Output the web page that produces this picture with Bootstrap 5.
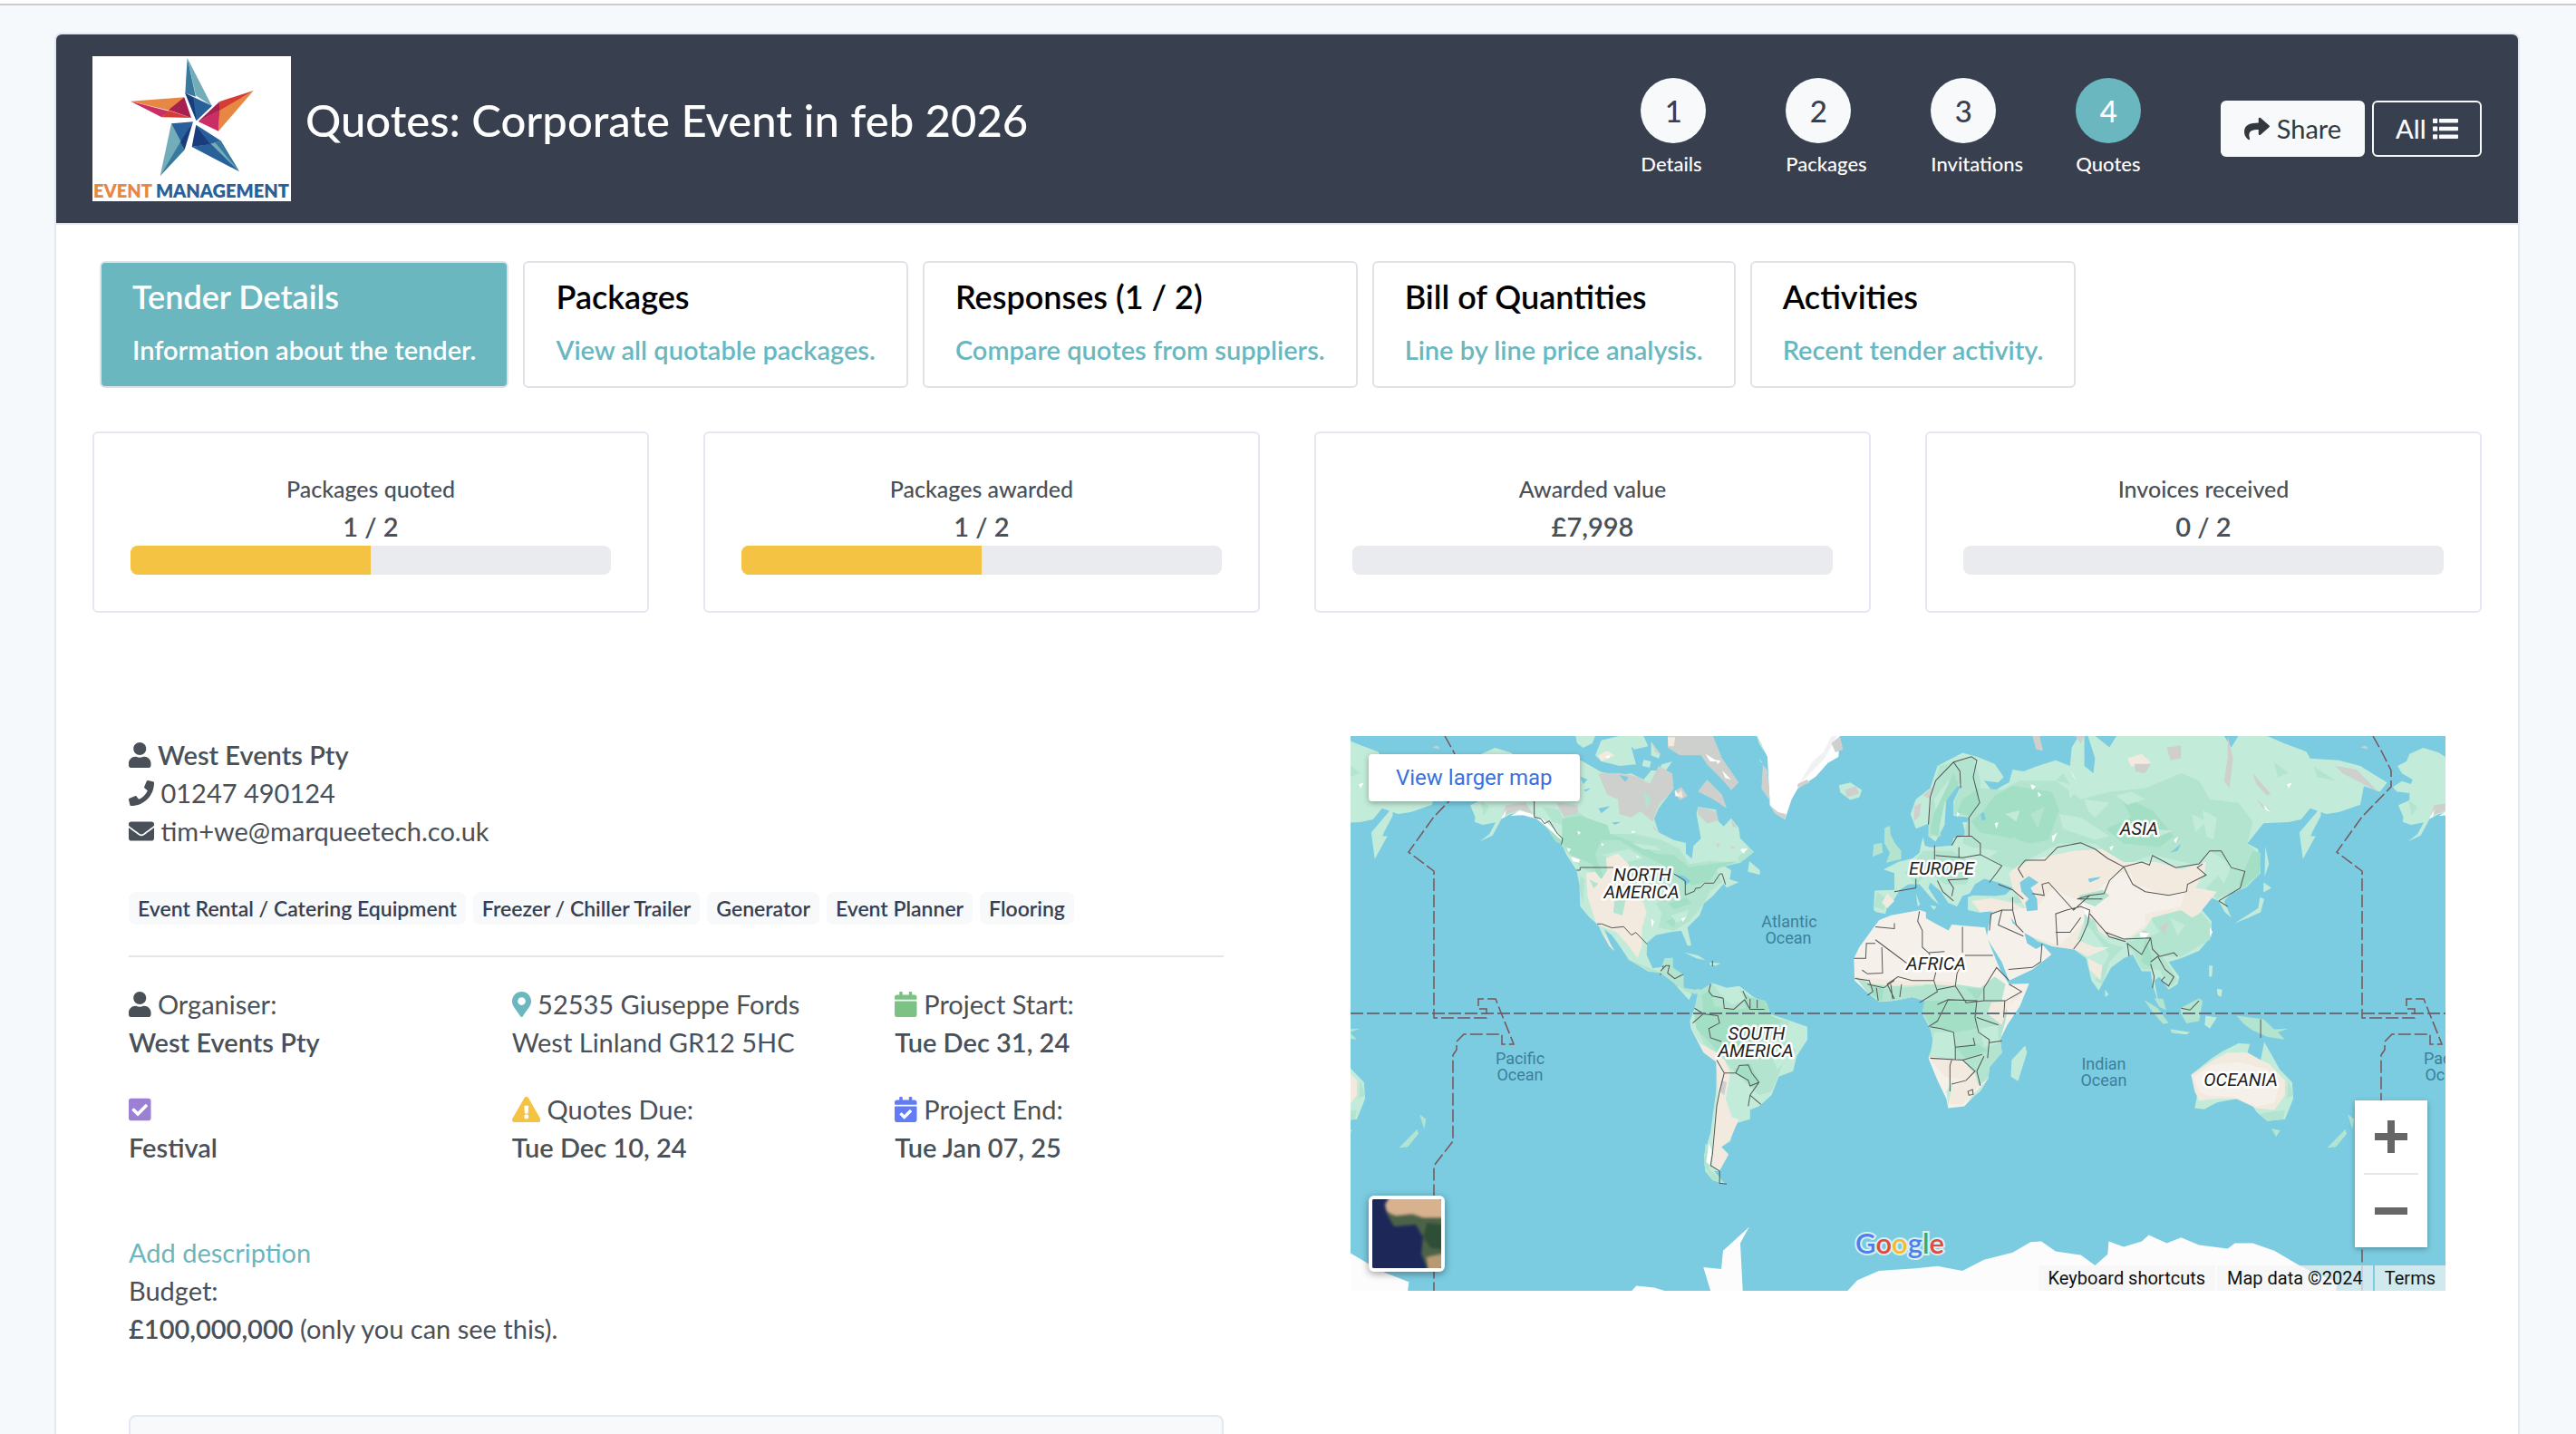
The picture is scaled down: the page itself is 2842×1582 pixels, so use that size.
<!DOCTYPE html>
<html lang="en">
<head>
<meta charset="utf-8">
<meta name="viewport" content="width=device-width, initial-scale=1">
<title>Quotes: Corporate Event in feb 2026</title>
<link href="https://cdn.jsdelivr.net/npm/bootstrap@5.3.0/dist/css/bootstrap.min.css" rel="stylesheet">
<style>
  :root { --teal: #6ab7bf; --navy: #384050; --line: #e4e8f1; --ink: #495057; }
  body { font-family: Lato, "Open Sans", sans-serif; font-size: 29px; line-height: 42px; color: var(--ink); background: #f5f9fc; border-top: 4px solid #fff; }
  .page-wrap { border-top: 2px solid #c9cbcf; padding: 30px 62px 0 60px; }
  .tender-card { border: 2px solid var(--line); border-radius: 8px 8px 0 0; background: #fff; min-height: 100vh; }
  .tender-head { background: var(--navy); border-bottom: 2px solid var(--line); border-radius: 6px 6px 0 0; padding: 24px 40px; }
  .tender-title { font-size: 49px; line-height: 60px; font-weight: 500; margin: 0 0 20px 16px; color: #fff; }
  .brand-logo { width: 219px; height: 160px; background: #fff; flex: none; }
  .step-link { width: 160px; color: #fff; font-size: 22px; line-height: 34px; font-weight: 500; text-decoration: none; }
  .step-num { width: 72px; height: 72px; border-radius: 50%; background: #f8f9fb; color: var(--navy); font-size: 33px; font-weight: 500; margin-bottom: 6px; }
  .step-link.current .step-num { background: var(--teal); color: #fff; }
  .head-btn { font-size: 29px; line-height: 42px; padding: 8px 24px; border: 2px solid #f8f9fb; border-radius: 6px; --bs-btn-color: #33383e; --bs-btn-bg: #f8f9fb; }
  .head-btn.btn-outline-light { --bs-btn-color: #f8f9fb; --bs-btn-bg: transparent; font-weight: 500; }
  .ico { height: 28px; width: auto; fill: currentColor; vertical-align: -3px; }
  .ico-teal { fill: var(--teal); }
  .ico-green { fill: #7cc285; }
  .ico-violet { fill: #9c80d4; }
  .ico-amber { fill: #f4c343; }
  .ico-blue { fill: #627cf4; }
  .tab-strip { padding: 40px 48px 0; gap: 16px; }
  .tab-box { border: 2px solid #dfe3e8; border-radius: 6px; padding: 16px 34px; height: 140px; text-decoration: none; color: var(--teal); font-weight: 600; white-space: nowrap; }
  .tab-box strong { display: block; font-size: 36px; line-height: 42px; font-weight: 600; color: #000; margin-bottom: 17px; }
  .tab-box.active { background: var(--teal); color: #fff; }
  .tab-box.active strong { color: #fff; }
  .stat-row { padding: 48px 40px 0; gap: 60px; }
  .stat-box { border: 2px solid var(--line); border-radius: 6px; padding: 40px; flex: 1 1 0; text-align: center; font-weight: 600; }
  .stat-label { font-size: 25px; font-weight: 500; }
  .stat-box .progress { height: 32px; border-radius: 8px; background: #e9ebef; }
  .stat-box .progress-bar { background: #f4c343; }
  .detail-row { padding: 136px 80px 0; gap: 140px; }
  .detail-col { flex: 1 1 0; min-width: 0; }
  .detail-col a { color: inherit; text-decoration: none; }
  .detail-col a.add-link { color: var(--teal); }
  .tag-list { gap: 8px; margin: 46px 0 34px; }
  .tag-pill { background: #f8f9fb; color: var(--navy); border-radius: 8px; padding: 0 10px; font-size: 23px; line-height: 36px; font-weight: 600; }
  .rule { height: 2px; background: #e3e5e8; margin-bottom: 31px; }
  .fact-row { --bs-gutter-x: 60px; --bs-gutter-y: 32px; margin-bottom: 74px; }
  .detail-col b { font-weight: 600; }
  .sub-card { border: 2px solid var(--line); border-radius: 8px; background: #f8f9fb; margin-top: 74px; height: 120px; }
  .map-box { position: relative; height: 612px; overflow: hidden; background: #7bcce1; font-family: Roboto, Arial, sans-serif; }
  .map-box > svg { display: block; width: 100%; height: 100%; }
  .map-larger { position: absolute; left: 20px; top: 20px; background: #fff; border-radius: 4px; padding: 5px 30px; font-size: 24px; box-shadow: 0 2px 6px rgba(0,0,0,.3); }
  .detail-col a.map-larger { color: #3871e0; }
  .map-sat { position: absolute; left: 20px; bottom: 21px; width: 84px; height: 84px; padding: 0; border: 4px solid #fff; border-radius: 6px; overflow: hidden; box-shadow: 0 2px 8px rgba(0,0,0,.4); background: #1e2a5c; }
  .map-sat svg { display: block; width: 100%; height: 100%; }
  .map-zoom { position: absolute; right: 20px; bottom: 48px; width: 80px; background: #fff; box-shadow: 0 2px 6px rgba(0,0,0,.3); padding: 0 10px; }
  .map-zoom button { display: flex; width: 60px; height: 80px; border: 0; background: none; align-items: center; justify-content: center; padding: 0; }
  .map-zoom button + button { border-top: 2px solid #e6e6e6; height: 82px; }
  .map-foot { position: absolute; right: 0; bottom: 0; gap: 2px; font-size: 20px; line-height: 28px; color: #111; white-space: nowrap; }
  .map-foot > * { background: rgba(245,245,245,.7); padding: 0 11px; }
  .map-foot button { border: 0; color: inherit; }
</style>
<script src="https://cdn.jsdelivr.net/npm/bootstrap@5.3.0/dist/js/bootstrap.bundle.min.js"></script>
</head>
<body class="vh-100 overflow-hidden">
<div class="page-wrap">
<main class="tender-card">
  <header class="tender-head d-flex align-items-center">
    <svg class="brand-logo" viewBox="36 36 657 480" role="img" aria-label="Event Management">
      <path fill="#74adba" d="M350 42L432 202 378 166z"/><path fill="#387a9d" d="M350 42L378 170 343 158z"/>
      <path fill="#28609a" d="M343 158L432 200 380 250z"/><path fill="#193c7c" d="M343 158L370 174 380 250z"/>
      <path fill="#e78743" d="M162 185L340 172 302 218z"/><path fill="#cb2d65" d="M162 185L290 218 265 238z"/>
      <path fill="#d43c34" d="M290 216L363 240 265 238z"/><path fill="#a82050" d="M340 172L363 240 288 214z"/>
      <path fill="#d43c34" d="M569 150L456 220 457 186z"/><path fill="#e78743" d="M569 150L453 284 456 216z"/>
      <path fill="#cb2d65" d="M386 252L457 212 453 284z"/><path fill="#a82050" d="M457 186L457 214 386 252z"/>
      <path fill="#74adba" d="M297 259L330 320 260 433z"/><path fill="#387a9d" d="M328 318L341 346 260 433z"/>
      <path fill="#28609a" d="M297 259L369 253 330 322z"/><path fill="#193c7c" d="M369 253L341 346 327 320z"/>
      <path fill="#74adba" d="M461 316L522 418 424 328z"/><path fill="#28609a" d="M365 336L428 326 522 418z"/>
      <path fill="#28609a" d="M379 263L461 316 424 328z"/><path fill="#193c7c" d="M379 263L426 328 365 336z"/>
      <path fill="#387a9d" d="M461 316L522 418 442 322z"/>
      <text x="39" y="504" font-family="Lato, sans-serif" font-weight="800" font-size="60" fill="#e78743">EVENT <tspan fill="#28609a">MANAGEMENT</tspan></text>
    </svg>
    <h1 class="tender-title me-auto">Quotes: Corporate Event in feb 2026</h1>
    <nav class="d-flex" aria-label="Steps">
      <a href="#" class="step-link"><span class="step-num d-flex align-items-center justify-content-center">1</span>Details</a>
      <a href="#" class="step-link"><span class="step-num d-flex align-items-center justify-content-center">2</span>Packages</a>
      <a href="#" class="step-link"><span class="step-num d-flex align-items-center justify-content-center">3</span>Invitations</a>
      <a href="#" class="step-link current" aria-current="step"><span class="step-num d-flex align-items-center justify-content-center">4</span>Quotes</a>
    </nav>
    <div class="d-flex gap-2">
      <button type="button" class="btn btn-light head-btn"><svg class="ico" viewBox="0 0 512 512"><path d="M503.691 189.836L327.687 37.851C312.281 24.546 288 35.347 288 56.015v80.053C127.371 137.907 0 170.1 0 322.326c0 61.441 39.581 122.309 83.333 154.132 13.653 9.931 33.111-2.533 28.077-18.631C66.066 312.814 132.917 274.316 288 272.085V360c0 20.7 24.3 31.453 39.687 18.164l176.004-152c11.071-9.562 11.086-26.753 0-36.328z"/></svg> Share</button>
      <button type="button" class="btn btn-outline-light head-btn">All <svg class="ico" viewBox="0 0 512 512"><path d="M80 368H16a16 16 0 0 0-16 16v64a16 16 0 0 0 16 16h64a16 16 0 0 0 16-16v-64a16 16 0 0 0-16-16zm0-320H16A16 16 0 0 0 0 64v64a16 16 0 0 0 16 16h64a16 16 0 0 0 16-16V64a16 16 0 0 0-16-16zm0 160H16a16 16 0 0 0-16 16v64a16 16 0 0 0 16 16h64a16 16 0 0 0 16-16v-64a16 16 0 0 0-16-16zm64-152h352a16 16 0 0 1 16 16v48a16 16 0 0 1-16 16H144a16 16 0 0 1-16-16V72a16 16 0 0 1 16-16zm0 160h352a16 16 0 0 1 16 16v48a16 16 0 0 1-16 16H144a16 16 0 0 1-16-16v-48a16 16 0 0 1 16-16zm0 160h352a16 16 0 0 1 16 16v48a16 16 0 0 1-16 16H144a16 16 0 0 1-16-16v-48a16 16 0 0 1 16-16z"/></svg></button>
    </div>
  </header>

  <nav class="tab-strip d-flex" aria-label="Tender sections">
    <a href="#" class="tab-box active"><strong>Tender Details</strong>Information about the tender.</a>
    <a href="#" class="tab-box"><strong>Packages</strong>View all quotable packages.</a>
    <a href="#" class="tab-box"><strong>Responses (1 / 2)</strong>Compare quotes from suppliers.</a>
    <a href="#" class="tab-box"><strong>Bill of Quantities</strong>Line by line price analysis.</a>
    <a href="#" class="tab-box"><strong>Activities</strong>Recent tender activity.</a>
  </nav>

  <section class="stat-row d-flex">
    <div class="stat-box"><div class="stat-label">Packages quoted</div><div>1 / 2</div><div class="progress"><div class="progress-bar" style="width:50%"></div></div></div>
    <div class="stat-box"><div class="stat-label">Packages awarded</div><div>1 / 2</div><div class="progress"><div class="progress-bar" style="width:50%"></div></div></div>
    <div class="stat-box"><div class="stat-label">Awarded value</div><div>£7,998</div><div class="progress"><div class="progress-bar" style="width:0%"></div></div></div>
    <div class="stat-box"><div class="stat-label">Invoices received</div><div>0 / 2</div><div class="progress"><div class="progress-bar" style="width:0%"></div></div></div>
  </section>

  <section class="detail-row d-flex align-items-start">
    <div class="detail-col">
      <div><svg class="ico" viewBox="0 0 448 512"><path id="user" d="M224 256c70.700 0 128-57.300 128-128S294.700 0 224 0 96 57.300 96 128s57.300 128 128 128zm89.600 32h-16.700c-22.200 10.200-46.900 16-72.900 16s-50.600-5.800-72.900-16h-16.700C60.200 288 0 348.200 0 422.400V464c0 26.500 21.500 48 48 48h352c26.500 0 48-21.500 48-48v-41.600c0-74.200-60.200-134.400-134.400-134.400z"/></svg> <b>West Events Pty</b></div>
      <div><svg class="ico" viewBox="0 0 512 512"><path d="M493.400 24.600l-104-24c-11.300-2.600-22.900 3.300-27.500 13.900l-48 112c-4.200 9.800-1.400 21.300 6.900 28l60.600 49.600c-36 76.700-98.900 140.500-177.200 177.200l-49.600-60.600c-6.800-8.300-18.200-11.100-28-6.900l-112 48C3.900 366.500-2 378.100.6 389.400l24 104C27.100 504.200 36.700 512 48 512c256.100 0 464-207.500 464-464 0-11.200-7.700-20.900-18.600-23.400z"/></svg> <a href="tel:01247490124">01247 490124</a></div>
      <div><svg class="ico" viewBox="0 0 512 512"><path d="M502.300 190.800c3.900-3.100 9.700-.2 9.700 4.700V400c0 26.500-21.500 48-48 48H48c-26.500 0-48-21.500-48-48V195.600c0-5 5.700-7.800 9.700-4.700 22.400 17.400 52.100 39.500 154.100 113.600 21.100 15.400 56.700 47.800 92.200 47.600 35.700.3 72-32.800 92.300-47.600 102-74.100 131.600-96.300 154-113.700zM256 320c23.200.4 56.600-29.200 73.400-41.400 132.700-96.300 142.800-104.700 173.400-128.700 5.800-4.500 9.200-11.500 9.200-18.900v-19c0-26.500-21.500-48-48-48H48c-26.500 0-48 21.500-48 48v19c0 7.400 3.400 14.300 9.200 18.900 30.600 23.900 40.700 32.400 173.400 128.700 16.800 12.200 50.200 41.800 73.400 41.400z"/></svg> <a href="mailto:tim+we@marqueetech.co.uk">tim+we@marqueetech.co.uk</a></div>
      <div class="tag-list d-flex flex-wrap">
        <span class="tag-pill">Event Rental / Catering Equipment</span><span class="tag-pill">Freezer / Chiller Trailer</span><span class="tag-pill">Generator</span><span class="tag-pill">Event Planner</span><span class="tag-pill">Flooring</span>
      </div>
      <div class="rule"></div>
      <div class="row fact-row mt-0">
        <div class="col-4 mt-0"><svg class="ico" viewBox="0 0 448 512"><use href="#user"/></svg> Organiser:<br><b>West Events Pty</b></div>
        <div class="col-4 mt-0"><svg class="ico ico-teal" viewBox="0 0 384 512"><path d="M172.268 501.670C26.970 291.031 0 269.413 0 192 0 85.961 85.961 0 192 0s192 85.961 192 192c0 77.413-26.970 99.031-172.268 309.670-9.535 13.774-29.930 13.773-39.464 0zM192 272c44.183 0 80-35.817 80-80s-35.817-80-80-80-80 35.817-80 80 35.817 80 80 80z"/></svg> 52535 Giuseppe Fords<br>West Linland GR12 5HC</div>
        <div class="col-4 mt-0"><svg class="ico ico-green" viewBox="0 0 448 512"><path d="M12 192h424c6.600 0 12 5.400 12 12v260c0 26.500-21.500 48-48 48H48c-26.500 0-48-21.500-48-48V204c0-6.600 5.400-12 12-12zm436-44v-36c0-26.500-21.500-48-48-48h-48V12c0-6.600-5.400-12-12-12h-40c-6.600 0-12 5.400-12 12v52H160V12c0-6.600-5.400-12-12-12h-40c-6.600 0-12 5.400-12 12v52H48C21.500 64 0 85.500 0 112v36c0 6.600 5.400 12 12 12h424c6.600 0 12-5.400 12-12z"/></svg> Project Start:<br><b>Tue Dec 31, 24</b></div>
        <div class="col-4"><svg class="ico ico-violet" viewBox="0 0 448 512"><path d="M400 480H48c-26.510 0-48-21.490-48-48V80c0-26.510 21.490-48 48-48h352c26.510 0 48 21.490 48 48v352c0 26.510-21.490 48-48 48zm-204.686-98.059l184-184c6.248-6.248 6.248-16.379 0-22.627l-22.627-22.627c-6.248-6.248-16.379-6.249-22.628 0L184 302.745l-70.059-70.059c-6.248-6.248-16.379-6.248-22.628 0l-22.627 22.627c-6.248 6.248-6.248 16.379 0 22.627l104 104c6.249 6.250 16.379 6.250 22.628.001z"/></svg><br><b>Festival</b></div>
        <div class="col-4"><svg class="ico ico-amber" viewBox="0 0 576 512"><path d="M569.517 440.013C587.975 472.007 564.806 512 527.940 512H48.054c-36.937 0-59.999-40.055-41.577-71.987L246.423 23.985c18.467-32.009 64.720-31.951 83.154 0l239.940 416.028zM288 354c-25.405 0-46 20.595-46 46s20.595 46 46 46 46-20.595 46-46-20.595-46-46-46zm-43.673-165.346l7.418 136c.347 6.364 5.609 11.346 11.982 11.346h48.546c6.373 0 11.635-4.982 11.982-11.346l7.418-136c.375-6.874-5.098-12.654-11.982-12.654h-63.383c-6.884 0-12.356 5.780-11.981 12.654z"/></svg> Quotes Due:<br><b>Tue Dec 10, 24</b></div>
        <div class="col-4"><svg class="ico ico-blue" viewBox="0 0 448 512"><path d="M436 160H12c-6.627 0-12-5.373-12-12v-36c0-26.510 21.490-48 48-48h48V12c0-6.627 5.373-12 12-12h40c6.627 0 12 5.373 12 12v52h128V12c0-6.627 5.373-12 12-12h40c6.627 0 12 5.373 12 12v52h48c26.510 0 48 21.490 48 48v36c0 6.627-5.373 12-12 12zM12 192h424c6.627 0 12 5.373 12 12v260c0 26.510-21.490 48-48 48H48c-26.510 0-48-21.490-48-48V204c0-6.627 5.373-12 12-12zm333.296 95.947l-28.169-28.398c-4.667-4.705-12.265-4.736-16.970-.068L194.120 364.665l-45.980-46.352c-4.667-4.705-12.266-4.736-16.971-.068l-28.397 28.170c-4.705 4.667-4.736 12.265-.068 16.970l82.601 83.269c4.667 4.705 12.265 4.736 16.970.068l142.953-141.805c4.705-4.667 4.736-12.265.068-16.970z"/></svg> Project End:<br><b>Tue Jan 07, 25</b></div>
      </div>
      <div><a href="#" class="add-link">Add description</a></div>
      <div>Budget:</div>
      <div><b>£100,000,000</b> (only you can see this).</div>
      <div class="sub-card"></div>
    </div>

    <div class="detail-col">
      <div class="map-box">
        <svg viewBox="0 0 1208 612" preserveAspectRatio="xMidYMid slice" role="img" aria-label="World map">
          <defs>
            <g id="world">
              <!-- North America -->
              <g transform="translate(110 -2) scale(.3333)">
                <path fill="#c3ebd9" d="M222 75L198 60 148 45 103 65 93 90 63 105 78 130 113 150 108 165 78 155 48 175 60 190 103 195 103 218 66 235 83 275 80 290 108 300 150 292 130 330 98 355 140 335 170 280 200 265 230 255 280 275 320 310 350 355 370 365 385 400 418 450 428 500 430 570 460 605 490 632 505 665 540 718 525 680 510 645 535 665 560 700 590 745 655 785 700 790 725 805 750 835 790 880 800 860 772 838 772 795 735 790 735 740 710 742 700 770 670 775 650 730 652 690 680 665 730 655 765 650 785 700 798 700 785 640 825 600 840 560 870 535 905 495 915 508 955 490 925 480 930 450 905 435 960 425 1005 390 985 370 960 345 955 310 930 278 905 305 885 285 880 250 820 240 815 265 830 345 805 370 800 412 780 395 780 360 740 350 690 325 675 280 690 245 735 185 710 125 735 90 700 100 690 120 665 120 640 150 600 130 560 135 500 125 430 85z"/>
                <path fill="#c3ebd9" d="M415 6L480 6 470 30 440 45 420 30zM480 70L500 20 560 6 590 10 615 100 560 105 500 90zM640 85L665 90 660 110 635 105zM665 25L695 65 690 80 665 70zM990 420L1025 450 1025 465 985 455zM775 722L820 732 845 748 815 742zM858 755L895 758 880 766 860 765zM560 6H640L655 40 610 50z"/>
                <path fill="#cdd0cc" d="M490 130L560 128 620 140 660 165 690 105 735 130 740 180 690 235 670 290 630 255 600 275 560 265 555 215 520 200zM720 6H870L900 80 955 160 930 185 900 150 850 100 830 70 760 70 720 45zM850 150L900 200 915 245 870 215 820 190zM740 190L765 175 785 205 760 218zM820 240L880 255 888 285 850 295 820 265zM665 25L695 65 680 60zM350 225L420 235 425 270 380 280zM172 270L185 235 250 225 270 262 230 250zM395 290L430 330 410 325zM670 300L690 325 675 315zM930 280L950 310 935 305zM880 360L893 365 885 376zM928 370L945 374 930 380z"/>
                <path fill="#b2e4cf" d="M380 270L430 260 520 330 610 330 700 350 760 380 790 430 860 420 960 425 880 445 900 490 860 520 840 560 790 620 740 650 690 640 700 590 680 560 720 540 660 530 630 500 520 480 430 440 370 370zM580 740L650 770 700 790 660 785 595 750zM305 240L360 250 380 300 340 290zM985 375L1005 390 960 425 950 410zM430 470L445 480 440 560 428 520zM710 742H735V790L700 780zM100 220L130 240 110 270zM640 190L665 215 650 250z"/>
                <path fill="#a3dfc4" d="M370 280L430 270 520 300 530 330 640 370 680 395 740 400 790 440 860 430 950 420 885 445 860 485 800 500 760 470 700 430 640 400 560 350 500 350 480 400 510 480 490 475 470 430 400 400 370 360zM320 310L365 345 370 365 345 350zM560 600L590 590 610 620 570 630zM720 560L780 540 800 560 740 580zM715 620L750 600 740 640z"/>
                <path fill="#c3ebd9" d="M600 360L680 370 700 385 640 380zM730 600L790 580 780 610 750 625zM500 400L590 380 640 410 580 425zM690 520L760 525 730 545z"/>
                <path fill="#f2eadf" d="M450 460L480 455 500 480 520 450 515 410 555 395 590 430 600 460 590 500 640 560 650 590 635 640 635 700 620 740 590 700 550 655 485 630 455 540zM495 640L545 718 525 700zM490 70L520 55 545 70 500 90zM720 10L745 10 740 40 722 40zM745 205L765 185 770 210z"/>
                <path fill="#b2e4cf" d="M545 540L580 550 570 600 540 590zM460 480L490 495 475 510z"/>
                <path fill="#fff" d="M280 275L305 280 350 320 370 350 355 340 320 305zM200 270L230 252 278 268 280 278 240 268zM400 405L430 415 425 425 405 420zM385 375L400 380 392 390zM845 65L885 90 860 90zM900 120L930 150 910 145zM960 380L985 378 970 395zM665 610L675 620 668 640zM765 610L780 605 770 622zM600 320L615 322 602 328zM500 360L510 365 502 370zM615 400L628 408 618 408zM168 278L185 250 180 275zM510 75L530 68 525 80zM745 185L755 200 745 205zM880 85L895 88 885 100zM420 320L432 325 425 333z"/>
                <path fill="#7bcce1" d="M430 140L455 150 440 165zM440 185L465 178 450 190zM490 245L530 238 500 262zM535 292L565 290 545 300zM740 462L775 470 795 485 780 500 770 485zM560 135L590 142 580 158z"/>
                <path fill="#fff" d="M1015 6L1050 75 1058 235 1075 262 1108 282 1130 215 1150 180 1210 140 1250 95 1285 75 1290 6z"/>
                <path fill="#f0f1f2" d="M1200 90L1235 60 1262 6H1280L1240 80 1150 170z"/>
                <path fill="#cdd0cc" d="M1035 100L1050 120 1058 220 1030 180zM1150 165L1180 150 1190 160 1150 178zM1262 30L1290 6 1300 50 1275 60zM1058 235L1075 262 1108 282 1112 265 1085 258z"/>
                <path fill="#c3ebd9" d="M1015 6L1030 30 1040 60 1022 30zM1022 80L1035 95 1028 92z"/>
                <path fill="none" stroke="#555" stroke-width="3" d="M278 222V274L300 280 312 296 328 287 355 330 372 345 368 365M418 450H430V441H540M740 462L778 485V532L808 520 812 510 828 508 842 493H872L893 462H900L911 497M486 628H502L535 641 574 637 600 665 614 656 652 695M695 797L707 780 703 768 730 765 718 790 740 812 772 795M750 830H770M868 750L868 768"/>
              </g>
              <!-- Central and South America -->
              <g transform="matrix(.3954 0 0 .4082 -10 -12)">
                <path fill="#b2e4cf" d="M900 650L925 628 925 655 950 672 955 710 985 715 1000 712 1000 728 965 722 925 695 890 670z"/>
                <path fill="#c3ebd9" d="M995 720L1035 697 1075 710 1110 705 1150 735 1185 750 1195 780 1240 795 1300 815 1300 850 1270 895 1260 935 1220 950 1200 1000 1165 1030 1140 1040 1140 1065 1105 1075 1090 1100 1085 1125 1060 1140 1080 1160 1055 1205 1040 1205 1070 1240 1035 1230 1015 1205 1012 1160 1030 1100 1045 990 1047 905 1010 880 975 820 972 800 985 765 1000 745z"/>
                <path fill="#b2e4cf" d="M995 720L1035 697 1060 730 1120 740 1190 760 1200 790 1250 800 1240 850 1270 880 1230 920 1200 990 1165 1000 1100 940 1060 900 1010 860 985 800 985 765zM1015 1130L1030 1150 1025 1200 1070 1238 1035 1230 1012 1190z"/>
                <path fill="#a3dfc4" d="M1005 730L1030 715 1040 760 1100 770 1190 755 1190 780 1230 800 1190 830 1120 880 1060 890 1020 850 990 820 985 780 1010 770zM1110 715L1140 735 1185 745 1180 765 1130 765zM1095 930L1140 915 1165 960 1150 980z"/>
                <path fill="#c3ebd9" d="M1060 735L1110 715 1130 745 1090 755zM1200 890L1250 860 1265 890 1215 930z"/>
                <path fill="#f2eadf" d="M975 820L1000 860 1047 885 1070 905 1085 940 1072 1010 1090 1060 1108 1065 1085 1120 1060 1140 1080 1160 1055 1203 1035 1195 1035 1120 1050 1000 1045 910 1010 885z"/>
                <path fill="#cdd0cc" d="M1060 960L1075 965 1068 1000 1055 990z"/><path fill="#fff" d="M1025 1130L1033 1150 1028 1190 1018 1180z"/>
                <path fill="none" stroke="#555" stroke-width="2.500" d="M1030 700L1025 720 1035 732 1065 738 1068 765 1095 768 1125 742 1140 768 1180 768M1120 718L1130 740M1140 740V765M1160 742V765M985 765L1010 780 1050 785 1055 805 1025 820 1030 845 1060 855M980 805L1010 780M1047 905L1068 940 1055 990 1047 1030 1035 1160 1030 1190 1055 1205M1068 940L1100 940 1110 920 1135 918 1145 940 1165 965 1140 1000 1135 1030M1140 1000L1170 1025M1100 940L1135 960 1140 975 1165 965M1055 1205V1238L1075 1240M890 665L905 650 915 650 910 670 930 685 950 675"/>
                <!-- Iceland, Britain and Ireland -->
                <path fill="#c3ebd9" d="M1388 162L1420 155 1452 175 1445 195 1420 202 1392 182z"/><path fill="#cdd0cc" d="M1405 175L1435 165 1445 185 1410 195z"/>
                <path fill="#b2e4cf" d="M1515 278L1530 272 1532 295 1545 320 1562 340 1562 362 1520 372 1530 345 1515 320zM1485 322L1508 318 1510 345 1482 355z"/>
              </g>
              <!-- Eurasia, Africa and Oceania -->
              <g transform="matrix(.3954 0 0 .4082 600 -12)">
                <path fill="#c3ebd9" d="M190 75L230 85 280 105 305 140 290 155 250 150 275 180 300 165 320 155 330 120 360 125 400 110 450 95 490 110 495 60 515 29 530 29 530 110 555 130 560 90 540 29H560L600 60 620 29H920L940 60 960 29H1040L1090 50 1150 72 1160 90 1240 95 1300 110 1350 140 1375 155 1355 180 1310 165 1300 215 1240 235 1205 240 1160 225 1135 255 1100 262 1030 265 985 320 1015 335 1022 400 980 440 955 440 920 475 940 520 922 505 905 475 880 465 850 490 885 530 885 570 850 610 800 630 765 640 795 680 790 700 765 715 740 680 725 690 735 740 760 770 740 760 720 700 715 665 690 665 665 620 640 630 605 655 585 690 570 718 550 690 535 630 500 605 440 598 400 585 380 570 362 560 370 590 395 605 415 595 438 620 385 660 320 690 300 640 258 575 262 550 270 520 272 500 240 507 205 500 205 465 220 460 280 462 310 458 330 440 290 425 250 415 225 430 210 455 190 462 175 490 150 480 130 450 100 425 95 440 125 485 105 470 70 430 40 430 15 445 0 470 -20 490 -25 510 -50 505 -58 500 -55 447 0 445 0 400 -30 390 10 370 50 360 70 345 75 320 80 302 85 325 100 330 160 325 165 305 200 300 190 262 205 262 215 250 165 245 165 205 185 165 165 165 145 200 140 270 115 315 95 300 98 265 60 280 45 240 60 200 100 170 120 110z"/>
                <path fill="#b2e4cf" d="M125 110L220 85 240 150 240 220 210 250 165 240 170 200 190 160 150 150 110 200 130 300 95 300 95 240zM200 270L240 170 300 175 350 150 450 150 520 200 600 180 700 170 800 130 850 150 880 200 960 210 1000 260 985 320 1010 340 980 440 900 470 870 440 910 400 930 370 880 340 850 380 720 350 640 380 560 320 460 320 380 360 340 390 300 380 240 340 190 320zM700 500L850 500 885 540 880 580 800 625 720 625 690 580 740 560zM30 400L80 340 160 340 230 380 200 430 140 430 100 400 60 430zM1140 290L1165 290 1150 340zM640 590L700 570 760 640 790 690 765 712 740 660 690 660 665 610zM-50 450L-20 470 -30 500 -55 490zM540 540L600 590 640 600 600 640 580 700 560 690 600 620zM320 470L365 450 370 480 340 480z"/>
                <path fill="#a3dfc4" d="M280 190L330 165 440 180 460 230 430 310 380 320 300 300 240 290 215 260 250 230zM110 240L165 130 180 160 140 210 120 300 100 290zM630 190L720 230 780 300 740 330 640 320 590 280 660 250zM1000 340L1022 345 1020 400 975 440 960 430zM700 575L720 630 715 655 690 640zM190 200L235 170 235 215 210 245 175 235zM560 450L610 450 590 480 545 480z"/>
                <path fill="#c3ebd9" d="M310 240L350 230 340 260zM530 200L600 210 560 250 540 230zM700 280L780 285 740 300zM830 240L870 260 840 290zM380 380L420 340 450 350 420 370zM780 380L840 400 800 410zM220 330L290 340 260 360zM770 520L810 540 790 570zM880 370L940 380 920 430zM480 120L520 160 490 200zM460 240L520 250 600 300 560 310 470 280zM860 230L900 250 890 310 870 300zM620 190L660 180 700 200 650 215z"/>
                <path fill="#b2e4cf" d="M380 240L420 220 400 280zM330 300L380 330 340 350zM1170 110L1230 150 1180 140zM470 130L490 160 450 150zM1060 100L1100 130 1070 140z"/>
                <path fill="#f2eadf" d="M345 380L380 365 450 350 500 340 580 335 640 370 730 370 800 390 870 370 865 400 840 440 900 450 850 510 830 520 800 500 720 520 700 550 660 575 590 570 550 540 530 530 510 580 560 600 600 600 540 625 505 607 440 598 380 570 340 520 330 480 370 500 330 440 320 400zM650 90L690 78 715 100 700 115 660 110zM215 475L270 468 330 480 330 500 240 505zM-20 455L0 475 -20 495 -35 480zM540 630L580 650 575 690 545 660z"/>
                <path fill="#f5f1ea" d="M330 500L400 490 440 440 500 470 550 460 620 400 660 400 670 430 760 460 810 450 800 490 700 510 700 540 640 580 590 560 545 500 520 540 460 595 380 570 340 550zM262 545L275 505 330 500 362 560 370 590 395 605 415 595 438 620 385 660 320 690 300 640 258 575z"/>
                <path fill="#b2e4cf" d="M515 460L580 445 600 460 560 490 520 475zM530 510L560 530 570 560 530 540z"/>
                <path fill="#cdd0cc" d="M930 29L945 90 935 170 920 150 930 90zM760 60L800 55 800 90 770 95zM1230 110L1290 120 1330 160 1350 180 1310 160 1250 130zM1000 130L1050 185 1040 190 1010 160zM1010 200L1050 230 1030 225zM670 105L715 105 700 130 672 125zM740 545L765 530 755 565zM55 220L75 210 70 245 55 260zM505 29H530L520 50zM80 190L110 165 100 200zM690 555L710 560 700 570zM385 29H405L415 70 395 65zM1300 60L1315 55 1322 65z"/>
                <path fill="#fff" d="M1030 215L1050 235 1035 228zM685 560L712 562 700 575 685 572zM525 480L548 510 540 520 528 500zM440 300L455 290 442 318zM280 265L290 262 285 280zM490 120L508 150 500 140zM780 310L792 300 785 320zM880 545L888 560 880 570zM380 160L395 165 385 175zM175 235L182 240 175 248zM400 180L410 188 402 195zM600 330L612 325 605 340zM1095 160L1110 155 1100 170z"/>
                <path fill="#7bcce1" d="M350 425L375 408 402 425 380 440 398 470 400 500 370 503 365 480 375 470 355 450zM540 415L575 410 570 415 545 425zM240 240L250 235 255 255 245 258zM770 345L800 320 790 340zM325 520L345 545 330 535zM370 420L380 418 378 424z"/>
                <!-- Africa -->
                <path fill="#f5f1ea" d="M-43 748L-73 725 -111 690 -113 630 -98 600 -53 540 -42 527 -9 514 71 500 88 505 88 522 122 540 151 555 160 539 253 547 261 580 295 661 320 700 376 698 350 760 315 810 295 850 300 885 265 925 262 955 240 985 195 1030 150 1035 145 1010 120 960 95 900 110 860 100 820 78 780 85 745 50 735 0 745z"/>
                <path fill="#b2e4cf" d="M-110 680L-60 690 0 700 60 695 110 700 170 700 240 710 280 680 310 700 300 740 315 770 310 800 295 850 300 885 265 925 262 955 235 975 220 940 190 905 95 895 110 860 100 820 78 780 85 745 50 735 0 745 -43 748 -73 725z"/>
                <path fill="#a3dfc4" d="M85 745L150 745 230 750 230 820 170 830 100 810 78 775zM-70 700L-30 715 -35 745 -60 730zM200 710L250 715 230 745zM170 870L230 860 260 880 200 900z"/>
                <path fill="#c3ebd9" d="M110 830L165 830 170 900 100 895zM240 820L290 810 290 860 250 870zM0 695L100 690 80 705 20 710zM145 990L165 960 150 1030zM200 1020L262 955 240 990z"/>
                <path fill="#f2eadf" d="M96 898L180 905 225 940 235 975 190 1025 155 1025 160 980 200 960 140 950zM-110 680L0 690 110 690 170 695 170 705 100 700 0 705 -60 700zM270 750L320 745 300 810 260 780zM330 730L355 725 320 760z"/>
                <path fill="#c3ebd9" d="M365 866L370 885 345 962 325 950 327 905zM588 715L598 728 588 735zM878 650L888 650 886 680 878 680zM900 712L915 715 912 735 902 730zM1130 290L1190 222 1190 245 1160 300 1175 300 1140 362zM1035 328L1045 375 1033 410zM1030 425L1052 440 1030 452zM950 535L1015 495 1020 465 1032 470 1022 505 985 522zM770 822L825 830 815 836 775 832zM868 785L900 790 880 820 866 810zM60 455L72 485 65 490zM100 487L118 490 110 500z"/>
                <path fill="#b2e4cf" d="M697 742L735 765 765 805 750 808 720 775zM725 738L750 740 758 770 740 762zM798 765L850 738 860 745 850 800 815 806 800 780zM955 785L1030 795 1060 822 1100 820 1070 830 1090 850 1040 842 1000 825 975 808zM775 825L800 832 770 830zM1265 1052L1283 1065 1278 1092zM1258 1092L1262 1105 1232 1140 1208 1142zM1052 1090L1077 1095 1065 1113z"/>
                <!-- Australia -->
                <path fill="#c3ebd9" d="M828 945L885 900 918 880 960 860 992 862 985 885 1022 905 1032 856 1052 890 1075 930 1110 965 1113 1010 1090 1065 1040 1070 1010 1045 1000 1030 955 1010 900 1020 865 1038 838 1035 845 1000z"/>
                <path fill="#f2eadf" d="M828 945L890 905 930 885 985 885 1022 905 1045 915 1090 960 1090 1000 1060 1040 1010 1035 955 1010 900 1010 850 1015 838 990z"/>
                <path fill="#f5f1ea" d="M835 950L880 920 960 910 1040 930 1075 970 1060 1020 1010 1030 950 1005 870 1000 850 990z"/>
                <path fill="#b2e4cf" d="M1020 1050L1090 1040 1085 1065 1040 1070zM1100 960L1113 1000 1095 1010z"/>
                <g fill="none" stroke="#555" stroke-width="2.500">
                  <path d="M95 268L100 195 115 150 165 100 215 85 230 95 220 140 238 210 208 250V300M165 100L183 125 185 170M160 325L175 300 215 300 240 320 240 350 190 358 115 352M112 325V365M180 330V358M240 350L300 380 285 400 265 425M205 415L150 418 165 440 160 462M120 420L135 450 165 475M0 450L60 440 60 415M290 430L330 445 360 470M345 388L365 365 420 365 455 330 520 318 560 335 595 360 640 383 600 420 585 455 545 460 500 500 430 425 412 430 418 460 385 455M345 388L360 412M640 383L690 370 712 378 720 352 785 385 850 375 880 340 912 340 940 385 978 395 965 440 905 475M640 383L665 430 700 450 765 460 815 450 818 430 870 405 845 385 860 375M545 460L510 470 580 470M300 500L330 500 340 540 360 560M330 500L330 465M265 555L270 510 300 500 290 540 360 570M318 660L385 655 408 640 412 590M455 595L450 510 480 500 520 490 545 500 540 535 520 580 500 605M450 560L490 560 520 520M545 510L590 560 640 578 715 575 690 620 650 590 655 625M590 560L600 572 645 585M715 575L720 605 740 625 780 615 790 625M715 640L735 625 755 660 780 680 765 705 745 690 755 680M720 710L725 680 715 645M800 765L825 770 850 745M1022 795V845M905 475L930 490"/>
                  <path d="M-113 630L-80 630 -78 590 -53 590M-53 545L0 550 0 535M-53 580L30 640 60 660M-35 600L-33 670 -75 672 -90 662M70 503L65 530 78 555V600L95 615 140 612M190 545V615M197 622H275M95 615L120 650 110 690 50 690 10 680 -20 700 0 740M110 690L120 720 70 750M120 715L170 705 175 670 190 640M170 705L200 750 250 745 250 710 285 655 320 690M250 745L310 745 355 720 320 700M120 755L150 742 230 745 225 790 235 830 265 850 260 900M100 815L130 820 165 830 170 870 225 865 220 845M100 900L190 905 245 890M170 870V905M155 990V920L160 905M160 970L200 960 225 935 190 905M240 975L230 935 250 895M265 858L300 853M230 790L290 810M308 745L305 790M150 742L120 800 95 815M-110 685L-70 690 -60 720 -75 730M-75 700L-30 710 0 690M-45 745L-50 710M-5 740L-10 700M15 735L20 700M205 990L218 985 220 998 208 1000z"/>
                </g>
                <!-- Antarctica -->
                <path fill="#fbfcfb" d="M-131 1529L-103 1500 -43 1475 60 1468 120 1462 190 1475 250 1445 330 1425 380 1397 410 1395 450 1422 520 1432 560 1460 595 1430 598 1395 640 1410 690 1395 710 1378 760 1400 800 1385 850 1405 930 1415 950 1400 1000 1400 1060 1420 1130 1460 1170 1480 1235 1505 1232 1529zM-405 1356L-430 1400 -423 1529H-513L-533 1465 -483 1470 -478 1420zM-733 1529L-720 1515 -670 1520 -640 1529z"/>
              </g>
            </g>
            <path id="dateline" d="M104 0L114 18 124 38V56L92 89 64 128 92 149V311H150V301H141V290H160L180 340H167V329H125L117 337V346L113 352V447L92 474V612"/>
          </defs>
          <use href="#world"/><use href="#world" x="1024"/><use href="#world" x="-1024"/>
          <g fill="none" stroke="#7b5357" stroke-width="1.500" stroke-dasharray="14 4"><path stroke="#63707c" stroke-width="2" d="M0 306H1208"/><use href="#dateline"/><use href="#dateline" x="1024"/></g>
          <g font-family="Roboto, sans-serif" font-size="20" font-style="italic" fill="#222" stroke="#fff" stroke-width="5" stroke-linejoin="round" paint-order="stroke" text-anchor="middle">
            <text x="322" y="160">NORTH</text><text x="321" y="179">AMERICA</text>
            <text x="448" y="335">SOUTH</text><text x="447" y="354">AMERICA</text>
            <text x="652" y="153">EUROPE</text><text x="646" y="258">AFRICA</text><text x="870" y="109">ASIA</text><text x="982" y="386">OCEANIA</text>
          </g>
          <g font-family="Roboto, sans-serif" font-size="18" fill="#3c7f9c" text-anchor="middle">
            <text x="484" y="211">Atlantic</text><text x="483" y="229">Ocean</text>
            <text x="187" y="362">Pacific</text><text x="187" y="380">Ocean</text>
            <text x="831" y="368">Indian</text><text x="831" y="386">Ocean</text>
            <text x="1211" y="362">Pacific</text><text x="1211" y="380">Ocean</text>
          </g>
          <text x="557" y="571" font-family="Lato, sans-serif" font-size="31" font-weight="600" stroke="#d9f0f6" stroke-width="4" paint-order="stroke"><tspan fill="#4c80ee">G</tspan><tspan fill="#df4b3e">o</tspan><tspan fill="#f3bd2f">o</tspan><tspan fill="#4c80ee">g</tspan><tspan fill="#48a65a">l</tspan><tspan fill="#df4b3e">e</tspan></text>
        </svg>
        <a href="#" class="map-larger">View larger map</a>
        <button type="button" class="map-sat" aria-label="Show satellite imagery">
          <svg viewBox="0 0 76 76"><defs><filter id="soft"><feGaussianBlur stdDeviation="1.500"/></filter></defs><path fill="#1d2859" d="M0 0H76V76H0z"/><g filter="url(#soft)"><path fill="#4d6446" d="M16 16L30 14 80 12V80H62L54 60 56 42 48 28 24 30z"/><path fill="#d8b28f" d="M14 6L20-4H80V20L56 20 44 16 26 18 16 14z"/><path fill="#2f4f36" d="M60 26L80 28V56L64 54 56 42z"/><path fill="#b89a72" d="M60 64L80 60V80H62z"/></g></svg>
        </button>
        <div class="map-zoom">
          <button type="button" aria-label="Zoom in"><svg width="36" height="36" viewBox="0 0 36 36"><path fill="#666" d="M14 0h8v14h14v8H22v14h-8V22H0v-8h14z"/></svg></button>
          <button type="button" aria-label="Zoom out"><svg width="36" height="36" viewBox="0 0 36 36"><path fill="#666" d="M0 14h36v8H0z"/></svg></button>
        </div>
        <div class="map-foot d-flex"><button type="button">Keyboard shortcuts</button><span>Map data ©2024</span><a href="#">Terms</a></div>
      </div>
    </div>
  </section>
</main>
</div>
</body>
</html>
